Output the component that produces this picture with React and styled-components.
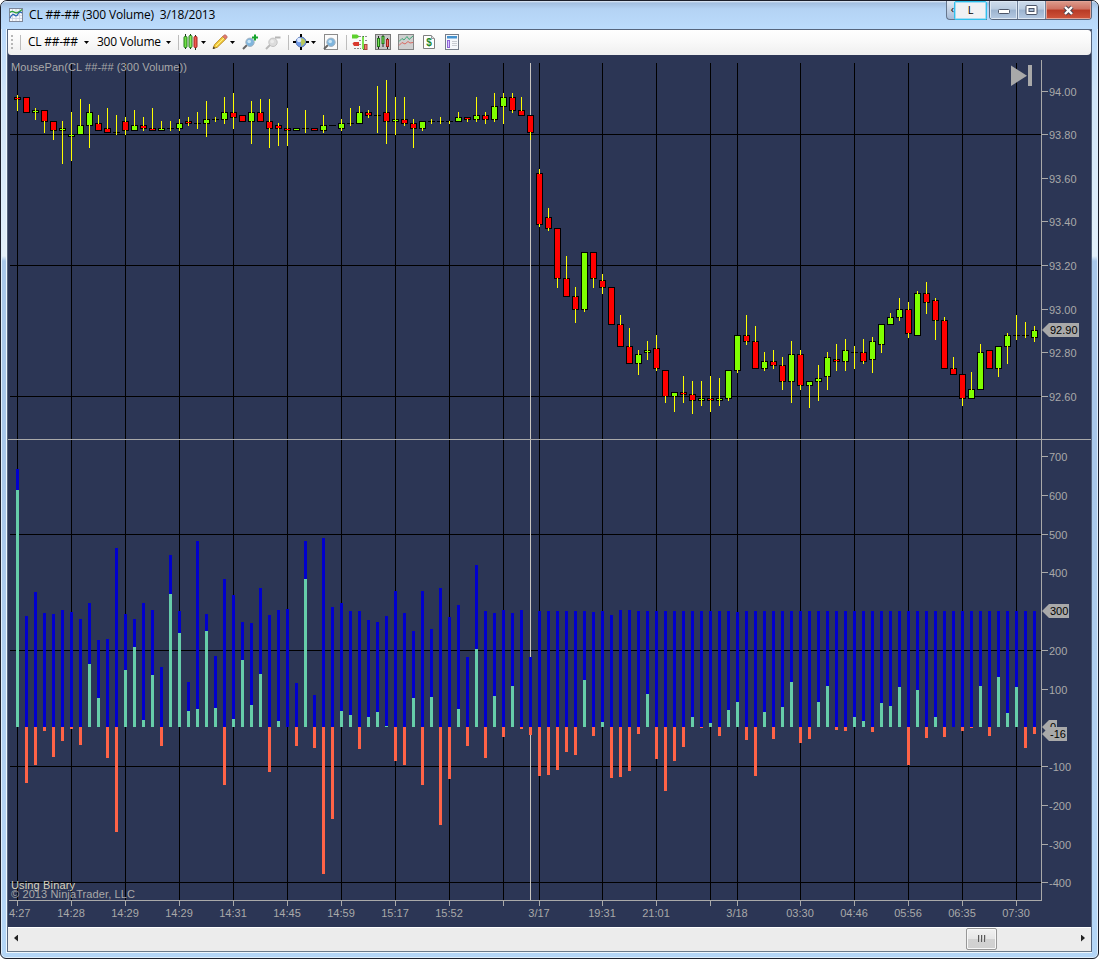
import React from 'react';
import styled, { createGlobalStyle } from 'styled-components';

const GlobalStyle = createGlobalStyle`
  body {
    margin: 0;
    background: #ffffff;
    overflow: hidden;
  }
`;

const Window = styled.div`
  display: flex;
  flex-direction: column;
  box-sizing: border-box;
  width: 1099px;
  height: 959px;
  border: 1px solid #1c1f2b;
  border-radius: 7px 7px 6px 6px;
  overflow: hidden;
  font-family: 'Open Sans', 'Noto Sans', sans-serif;
  font-size: 12px;
  color: #000;
  box-shadow: inset 0 0 0 1px #dfeefb;
  background: linear-gradient(to bottom, #b9d9fb 0, #b9d9fb 30px, #cfe4f8 90px, #e3f0fa 255px, #a9c8ea 260px, #a9c8ea 480px, #b4d3f3 800px, #b4d6f7 100%);
`;

const TitleBar = styled.div`
  display: flex;
  align-items: flex-start;
  height: 28px;
  flex: none;
  padding: 0 6px 0 8px;
  background: linear-gradient(to bottom, #e4edf8 0, #a3bfe0 2px, #b4d3f4 8px, #bbdbfc 27px);
`;

const AppIcon = styled.svg`
  margin-top: 7px;
  width: 14px;
  height: 14px;
`;

const Title = styled.div`
  margin: 5px auto 0 6px;
  line-height: 17px;
  white-space: pre;
  letter-spacing: ${props => props.$track || 0}px;
`;

const Captions = styled.div`
  display: flex;
  height: 19px;
`;

const LangButton = styled.div`
  display: flex;
  border: 1px solid #66768d;
  border-top: none;
  border-right: none;
  border-radius: 0 0 0 4px;
  width: 40px;
  height: 18px;
  background: linear-gradient(to bottom, #dfe8f3, #a7bcd8);
`;

const LangArrow = styled.div`
  width: 7px;
  font-size: 11px;
  line-height: 16px;
  text-align: right;
`;

const LangKey = styled.div`
  flex: 1;
  box-sizing: border-box;
  height: 19px;
  border: 1px solid #2fc2ec;
  box-shadow: inset 0 0 0 1px #a5dcf4;
  border-radius: 2px;
  background: #f0f1f3;
  text-align: center;
  line-height: 16px;
  font-size: 11px;
`;

const CaptionGroup = styled.div`
  display: flex;
  margin-left: 2px;
  width: 103px;
  height: 19px;
  box-sizing: border-box;
  border: 1px solid #57667d;
  border-top: none;
  border-radius: 0 0 4px 4px;
  overflow: hidden;
`;

const CaptionButton = styled.div`
  display: flex;
  align-items: center;
  justify-content: center;
  flex: ${props => (props.$close ? '1' : 'none')};
  width: 27px;
  border-left: ${props => (props.$first ? 'none' : '1px solid #6f8099')};
  box-shadow: inset 0 0 0 1px ${props => (props.$close ? '#e2a396' : '#dce7f3')};
  background: ${props =>
    props.$close
      ? 'linear-gradient(to bottom, #dc9c8d 0, #ce7161 45%, #b83a25 50%, #d0553c 100%)'
      : 'linear-gradient(to bottom, #cfdceb 0, #b9cbe0 45%, #9cb3cf 50%, #b5cae3 100%)'};
`;

const Client = styled.div`
  display: flex;
  flex-direction: column;
  flex: none;
  margin: 0 6px 0 5px;
  border: 1px solid #eef7fd;
  border-top: none;
`;

const Inner = styled.div`
  display: flex;
  flex-direction: column;
  width: 1083px;
  border: 1px solid #56657d;
  border-bottom: 1px solid #6c7a8b;
  background: #2c3655;
`;

const Toolbar = styled.div`
  display: flex;
  align-items: center;
  height: 25px;
  border-radius: 0 3px 4px 3px;
  background: linear-gradient(to bottom, #ffffff, #fafafa 40%, #efefef);
`;

const Grip = styled.div`
  width: 2px;
  height: 15px;
  margin-left: 3px;
  background: repeating-linear-gradient(to bottom, #b7b7b7 0, #b7b7b7 2px, transparent 2px, transparent 4px);
`;

const Separator = styled.div`
  width: 1px;
  height: 15px;
  margin-left: ${props => props.$gap}px;
  background: #bdbdbd;
`;

const Label = styled.div`
  width: ${props => props.$width}px;
  margin-left: ${props => props.$gap}px;
  margin-bottom: 2px;
  line-height: 17px;
  white-space: nowrap;
  letter-spacing: -0.25px;
`;

const Caret = styled.div`
  width: 5px;
  height: 3px;
  flex: none;
  margin-left: ${props => props.$gap}px;
  background: #000;
  clip-path: polygon(0 0, 100% 0, 50% 100%);
`;

const IconBox = styled.svg`
  width: 16px;
  height: 16px;
  flex: none;
  margin-left: ${props => props.$gap}px;
  margin-bottom: 1px;
`;

const Chart = styled.svg`
  display: block;
  width: 1083px;
  height: 872px;
  background: #2c3655;
  text {
    font-family: 'Liberation Sans', Arial, sans-serif;
    font-size: 11px;
    fill: #a9a9a9;
  }
`;

const ScrollBar = styled.div`
  display: flex;
  align-items: center;
  height: 24px;
  background: #ececec;
  border-top: 1px solid #fff;
  box-sizing: border-box;
`;

const ScrollArrow = styled.div`
  margin-left: ${props => (props.$right ? 'auto' : '6px')};
  margin-right: ${props => (props.$right ? '6px' : '0')};
  margin-bottom: 3px;
  width: 4px;
  height: 7px;
  background: #222;
  clip-path: ${props => (props.$right ? 'polygon(0 0, 100% 50%, 0 100%)' : 'polygon(100% 0, 0 50%, 100% 100%)')};
`;

const Thumb = styled.div`
  display: flex;
  align-items: center;
  justify-content: center;
  gap: 1px;
  margin-left: 948px;
  width: 31px;
  height: 22px;
  margin-bottom: 1px;
  box-sizing: border-box;
  border: 1px solid #979797;
  border-radius: 2px;
  box-shadow: inset 0 0 0 1px #f7f7f7;
  background: linear-gradient(to bottom, #f1f1f1 0, #e6e6e6 48%, #d2d2d2 52%, #d0d0d0 100%);
`;

const ThumbLine = styled.div`
  width: 2px;
  height: 7px;
  margin-bottom: 2px;
  background: linear-gradient(to right, #5a5a5a 50%, #c8c8c8 50%);
`;

// wick top, body top, body bottom, wick bottom, direction (r down, g up, d doji)
const candles = `
95 97 100 111 r|97 97 113 113 r|108 110 113 120 g|110 110 122 133 r|121 121 131 140 r|121 128 131 164 g|
112 134 137 161 g|99 125 135 135 g|104 112 126 148 g|115 123 131 131 r|108 128 133 133 r|115 132 133 135 d|
117 121 131 135 r|110 125 131 131 g|117 125 129 131 r|108 128 131 131 r|121 128 131 131 g|121 128 129 131 d|
119 123 129 131 g|117 121 124 126 r|112 123 124 129 d|101 119 124 137 g|117 119 120 122 d|97 112 120 124 g|
93 112 118 129 r|115 115 122 122 r|101 112 122 144 g|99 112 122 122 r|99 121 129 148 r|123 125 129 146 r|
108 128 131 146 r|128 128 131 131 g|110 128 129 133 d|128 128 131 131 r|115 125 131 133 g|125 125 126 126 d|
119 123 129 131 g|108 123 124 126 d|106 112 124 124 g|110 112 116 118 r|86 115 116 133 d|80 112 122 144 r|
97 119 122 135 g|97 119 124 126 r|119 123 129 148 r|121 121 129 131 g|119 121 122 124 d|117 121 122 124 d|
121 121 122 124 d|112 117 122 122 g|117 117 120 122 r|97 115 120 122 g|112 115 120 124 r|93 106 120 122 g|
93 97 107 124 g|93 97 111 113 r|97 110 116 116 r|115 115 133 140 r|169 173 225 227 r|208 217 229 231 r|
228 228 279 288 r|256 278 297 297 r|287 296 310 323 r|252 252 310 312 g|252 252 279 288 r|274 280 288 294 r|
287 287 325 325 r|315 324 347 347 r|328 346 364 364 r|350 354 364 375 g|341 350 353 360 g|335 348 369 371 r|
370 370 397 403 r|392 392 397 412 g|376 392 395 403 r|381 394 401 414 r|381 398 401 406 g|376 398 401 412 r|
378 398 401 406 g|370 370 399 401 g|335 335 371 373 g|315 335 342 345 r|326 341 369 369 r|352 361 369 371 g|
350 361 366 369 r|357 365 382 390 r|341 354 382 403 g|350 354 386 390 r|381 381 386 408 g|365 378 382 401 g|
352 357 377 390 g|344 359 362 371 r|339 350 362 371 g|346 352 353 369 d|339 352 362 364 r|337 341 360 373 g|
324 324 345 353 g|313 317 325 325 g|298 309 318 321 g|302 309 334 338 r|291 293 336 336 g|282 293 303 314 r|
298 300 321 340 r|317 320 369 369 r|357 368 375 375 r|374 374 399 406 r|372 389 399 399 g|344 352 390 390 g|
350 350 369 369 r|346 346 369 377 g|333 335 347 364 g|315 335 336 340 d|322 335 336 338 d|326 330 338 342 g`
  .trim()
  .split('|')
  .map(row => {
    const [high, top, bottom, low, dir] = row.trim().split(' ');
    return { high: +high, top: +top, bottom: +bottom, low: +low, dir };
  });

// top of the volume bar, end of the delta bar
const volumes = `
469 490|616 783|592 765|613 731|614 757|610 741|612 729|619 745|603 664|640 698|639 758|548 832|614 670|619 647|
603 720|610 675|667 746|555 594|611 633|682 711|541 709|614 631|656 708|579 785|595 719|622 660|623 705|588 674|
615 772|610 721|609 727|683 746|541 579|695 748|538 874|607 819|603 711|611 715|611 749|620 717|622 712|616 726|
591 761|613 765|631 698|591 785|629 697|588 825|617 779|605 709|657 746|565 649|611 758|613 696|610 737|613 686|
610 729|657 735|611 776|611 775|611 770|611 752|611 755|611 680|612 736|611 722|615 778|610 777|610 771|611 734|
611 694|611 759|611 791|611 761|611 747|611 717|611 728|611 723|611 736|611 710|612 702|611 740|611 776|611 712|
611 739|611 707|611 682|611 743|611 739|611 702|611 686|611 730|611 731|611 717|611 721|611 732|611 703|611 706|
611 687|611 765|611 690|611 738|611 717|611 737|611 727|611 731|611 728|611 686|611 736|611 677|611 713|611 687|
611 748|611 734`
  .trim()
  .split('|')
  .map(row => row.trim().split(' ').map(Number));

const ZERO = 727;

const times = [
  [17, ''], [71, '14:28'], [125, '14:29'], [179, '14:29'], [233, '14:31'], [287, '14:45'], [341, '14:59'],
  [395, '15:17'], [449, '15:52'], [503, ''], [539, '3/17'], [602, '19:31'], [656, '21:01'], [710, ''],
  [737, '3/18'], [800, '03:30'], [854, '04:46'], [908, '05:56'], [962, '06:35'], [1016, '07:30']
];

const prices = [
  [91, '94.00'], [134, '93.80'], [178, '93.60'], [221, '93.40'], [265, '93.20'], [309, '93.00'], [352, '92.80'],
  [396, '92.60'], [456, '700'], [495, '600'], [534, '500'], [572, '400'], [650, '200'], [689, '100'],
  [766, '-100'], [805, '-200'], [844, '-300'], [882, '-400']
];

const markers = [
  [330, 1079, '92.90'], [611, 1069, '300'], [727, 1057, '0'], [734, 1067, '-16']
];

const barX = i => 17 + i * 9;

const Candle = ({ x, high, top, bottom, low, dir }) => {
  if (dir === 'd') {
    return (
      <g>
        <rect x={x - 3} y={top} width="7" height="1" fill="#000" />
        {low - high > 1 && <rect x={x} y={high} width="1" height={low - high} fill="#ffff00" />}
      </g>
    );
  }
  return (
    <g>
      <rect x={x - 3} y={top} width="7" height={bottom - top} fill="#000" />
      <rect x={x - 2} y={top + 1} width="5" height={bottom - top - 2} fill={dir === 'r' ? '#ff0000' : '#7fff00'} />
      {high < top && <rect x={x} y={high} width="1" height={top + 1 - high} fill="#ffff00" />}
      {low > bottom && <rect x={x} y={bottom - 1} width="1" height={low - bottom + 1} fill="#ffff00" />}
    </g>
  );
};

const PriceChart = () => (
  <Chart viewBox="8 55 1083 872" shapeRendering="crispEdges">
    {times.map(([x]) => (
      <rect key={x} x={x} y="63" width="1" height="837" fill="#000" />
    ))}
    {[134, 265, 396, 534, 650, 766, 882].map(y => (
      <rect key={y} x="10" y={y} width="1031" height="1" fill="#000" />
    ))}
    <rect x="530" y="63" width="1" height="837" fill="#c8c5c0" />

    {candles.map((c, i) => (
      <Candle key={i} x={barX(i)} {...c} />
    ))}
    {volumes.map(([top, delta], i) => (
      <g key={i}>
        <rect x={barX(i) - 1} y={top} width="3" height={ZERO - top} fill="#0000cd" />
        <rect
          x={barX(i) - 1}
          y={Math.min(delta, ZERO)}
          width="3"
          height={Math.abs(delta - ZERO)}
          fill={delta < ZERO ? '#66cdaa' : '#ff6347'}
        />
      </g>
    ))}

    <rect x="8" y="439" width="1083" height="1" fill="#a9a9a9" />
    <rect x="1041" y="60" width="1" height="841" fill="#a9a9a9" />
    <rect x="9" y="900" width="1032" height="1" fill="#a9a9a9" />
    {times.map(([x, label]) => (
      <g key={x}>
        <rect x={x} y="901" width="1" height="5" fill="#a9a9a9" />
        <text x={x} y="917" textAnchor="middle">{label}</text>
      </g>
    ))}
    <text x="9" y="917">4:27</text>
    {prices.map(([y, label]) => (
      <g key={label}>
        <rect x="1042" y={y} width="6" height="1" fill="#a9a9a9" />
        <text x="1049" y={y + 5}>{label}</text>
      </g>
    ))}
    {markers.map(([y, right, label]) => (
      <g key={label}>
        <path d={`M1042 ${y}L1049 ${y - 7}H${right}V${y + 7}H1049Z`} fill="#a9a9a9" shapeRendering="auto" />
        <text x="1050" y={y + 4} style={{ fill: '#000' }}>{label}</text>
      </g>
    ))}

    <text x="11" y="71" textLength="176">MousePan(CL ##-## (300 Volume))</text>
    <text x="11" y="889" textLength="64" style={{ fill: '#d8d3bd' }}>Using Binary</text>
    <text x="11" y="898" textLength="124">© 2013 NinjaTrader, LLC</text>
    <path d="M1011 65.5L1027 75.8L1011 86Z" fill="#a9a9a9" shapeRendering="auto" />
    <rect x="1028" y="65" width="4" height="21" fill="#a9a9a9" />
  </Chart>
);

const TriCandles = () => (
  <>
    <path d="M2.5 0V15M7.5 0V15M12.5 1V16" stroke="#1d3a1d" />
    <rect x="1" y="2.5" width="3" height="11" rx="1" fill="#6ee043" stroke="#257a1d" />
    <rect x="6" y="1.5" width="3" height="12" rx="1" fill="#8aec5c" stroke="#257a1d" />
    <rect x="11" y="2.5" width="3" height="11" rx="1" fill="#ee5a50" stroke="#a3221c" />
  </>
);

const Magnifier = ({ grey }) => (
  <>
    <path d="M1 15L5 11" stroke={grey ? '#b9b9b9' : '#666'} strokeWidth="2" />
    <circle cx="8" cy="8.3" r="4.2" fill={grey ? '#dcdcdc' : '#7fb5dd'} stroke={grey ? '#c3c3c3' : '#a6b4c1'} />
    <circle cx="7.2" cy="7.5" r="1.8" fill={grey ? '#ececec' : '#c9e4f5'} />
  </>
);

const ToolbarRow = () => (
  <Toolbar>
    <Grip />
    <Separator $gap={7} />
    <Label $gap={7} $width={50}>CL ##-##</Label>
    <Caret $gap={6} />
    <Label $gap={8} $width={63}>300 Volume</Label>
    <Caret $gap={6} />
    <Separator $gap={7} />
    <IconBox $gap={4} viewBox="0 0 16 16">
      <TriCandles />
    </IconBox>
    <Caret $gap={2} />
    <IconBox $gap={6} viewBox="0 0 16 16">
      <path d="M1 14.5L2.6 10.6L11 2.2L13.8 5L5.2 13.3Z" fill="#f6cf3d" stroke="#b98a25" />
      <path d="M4 12L12.3 3.7" stroke="#fff08c" />
      <path d="M10.6 2.5L12.2 1Q13.2 .4 14.4 1.6Q15.6 2.8 15 3.8L13.5 5.3Z" fill="#e57a6d" stroke="#a9675d" strokeWidth=".7" />
      <path d="M.8 15L1.6 12.6L3.3 14.2Z" fill="#333" />
    </IconBox>
    <Caret $gap={2} />
    <IconBox $gap={7} viewBox="0 0 16 16">
      <Magnifier />
      <path d="M10 3.5H16M13 .5V6.5" stroke="#17a42c" strokeWidth="2" />
    </IconBox>
    <IconBox $gap={7} viewBox="0 0 16 16">
      <Magnifier grey />
      <path d="M10 3.5H15.5" stroke="#b5b5b5" strokeWidth="2" />
    </IconBox>
    <Separator $gap={7} />
    <IconBox $gap={4} viewBox="0 0 16 16">
      <circle cx="8" cy="8" r="5" fill="#6f9bea" stroke="#5b78b3" />
      <path d="M8 4Q13 5 12.3 8.5Q10 12 8 12.5Q9 9 7 8Z" fill="#b8c95a" />
      <circle cx="6.2" cy="6" r="2.2" fill="#dbe8ff" />
      <path d="M8 0V3M8 13V16M0 8H3M13 8H16" stroke="#000" strokeWidth="2" />
    </IconBox>
    <Caret $gap={2} />
    <IconBox $gap={7} viewBox="0 0 16 16">
      <rect x="1.5" y=".5" width="13" height="15" fill="#fbfbfb" stroke="#8b8b8b" />
      <Magnifier />
    </IconBox>
    <Separator $gap={7} />
    <IconBox $gap={5} viewBox="0 0 16 16">
      <path d="M7 2.5H15M7 6.5H15M7 10.5H10M2 14.5H9" stroke="#8c8c8c" strokeDasharray="2 1" />
      <path d="M0 .5H5L7.5 2.5L5 4.5H0Z" fill="#5ed02f" />
      <path d="M.5 9.5L2 8H7V12H2Z" fill="#d93a2f" />
      <path d="M11.5 2V16" stroke="#388b25" />
      <rect x="10" y="3" width="2" height="12" fill="#7ae04c" />
      <rect x="12.5" y="10.5" width="2.5" height="5" fill="#f07b70" stroke="#a9453c" />
    </IconBox>
    <IconBox $gap={7} viewBox="0 0 16 16">
      <rect x=".5" y=".5" width="15" height="15" fill="#c6c6c6" stroke="#777" />
      <path d="M3.5 2V15M8 1V13M12.5 4V15" stroke="#222" />
      <rect x="2.5" y="4.5" width="2" height="8" fill="#7ce354" stroke="#257a1d" />
      <rect x="7" y="2.5" width="2" height="7" fill="#7ce354" stroke="#257a1d" />
      <rect x="11.5" y="5.5" width="2" height="7" fill="#ef6b62" stroke="#a3221c" />
    </IconBox>
    <IconBox $gap={7} viewBox="0 0 16 16">
      <rect x=".5" y=".5" width="15" height="15" fill="#cfcfcf" stroke="#858585" />
      <path d="M1 7.5L4 4.5L6 6L9 2.5L11 5.5L15 2" fill="none" stroke="#3fa878" />
      <path d="M1 11.5L4 8.5L7 10L10 7.5L12 9L15 8.5" fill="none" stroke="#d96a62" />
    </IconBox>
    <IconBox $gap={7} viewBox="0 0 16 16">
      <path d="M2.5 1.5H10.5L13.5 4.5V14.5H2.5Z" fill="#fff" stroke="#7f7f7f" />
      <path d="M10.5 1.5V4.5H13.5" fill="#ddd" stroke="#999" />
      <text x="8" y="12" textAnchor="middle" fontSize="10" fontWeight="bold" fill="#21852a" fontFamily="Liberation Sans, sans-serif">$</text>
    </IconBox>
    <IconBox $gap={7} viewBox="0 0 16 16">
      <rect x="1.5" y=".5" width="13" height="15" fill="#f6f8fb" stroke="#777e8a" />
      <rect x="3" y="2" width="10" height="2.5" fill="#4492cf" />
      <rect x="3.5" y="6.5" width="2" height="7" fill="#d9c7ff" stroke="#8f65d6" />
      <path d="M8 7.5H13M8 9.5H13M8 11.5H13" stroke="#c9ccd2" />
    </IconBox>
  </Toolbar>
);

const App = () => (
  <>
    <GlobalStyle />
    <Window>
      <TitleBar>
        <AppIcon viewBox="0 0 14 14">
          <rect x=".5" y=".5" width="13" height="13" fill="#f5f7fb" stroke="#7d8699" />
          <path d="M3.5 1V13M7 1V13M10.5 1V13M1 4H13M1 7.5H13M1 10.5H13" stroke="#c7cede" strokeWidth=".8" />
          <path d="M1 4.5Q3 2.5 5 4T9 4.5T13 1.5" fill="none" stroke="#2fa438" strokeWidth="1.4" />
          <path d="M1 10Q3.5 5 5.5 7T9 6T13 5" fill="none" stroke="#2864b4" strokeWidth="1.2" />
        </AppIcon>
        <Title $track={-0.16}>{'CL ##-## (300 Volume)  3/18/2013'}</Title>
        <Captions>
          <LangButton>
            <LangArrow>‹</LangArrow>
            <LangKey>L</LangKey>
          </LangButton>
          <CaptionGroup>
            <CaptionButton $first>
              <svg width="14" height="8" viewBox="0 0 14 8">
                <rect x="1.5" y="3.5" width="11" height="4" rx="1" fill="#fff" stroke="#4c5568" />
              </svg>
            </CaptionButton>
            <CaptionButton>
              <svg width="13" height="11" viewBox="0 0 13 11">
                <rect x="1" y=".5" width="11" height="9" rx="1" fill="#fff" stroke="#4c5568" />
                <rect x="4" y="3.5" width="5" height="3" fill="#a9bdd6" stroke="#4c5568" />
              </svg>
            </CaptionButton>
            <CaptionButton $close>
              <svg width="13" height="11" viewBox="0 0 13 11">
                <path d="M3 2L10 9M10 2L3 9" stroke="#4d4550" strokeWidth="4.4" />
                <path d="M3 2L10 9M10 2L3 9" stroke="#fff" strokeWidth="2.4" />
              </svg>
            </CaptionButton>
          </CaptionGroup>
        </Captions>
      </TitleBar>
      <Client>
        <Inner>
          <ToolbarRow />
          <PriceChart />
          <ScrollBar>
            <ScrollArrow />
            <Thumb>
              <ThumbLine />
              <ThumbLine />
              <ThumbLine />
            </Thumb>
            <ScrollArrow $right />
          </ScrollBar>
        </Inner>
      </Client>
    </Window>
  </>
);

export default App;
